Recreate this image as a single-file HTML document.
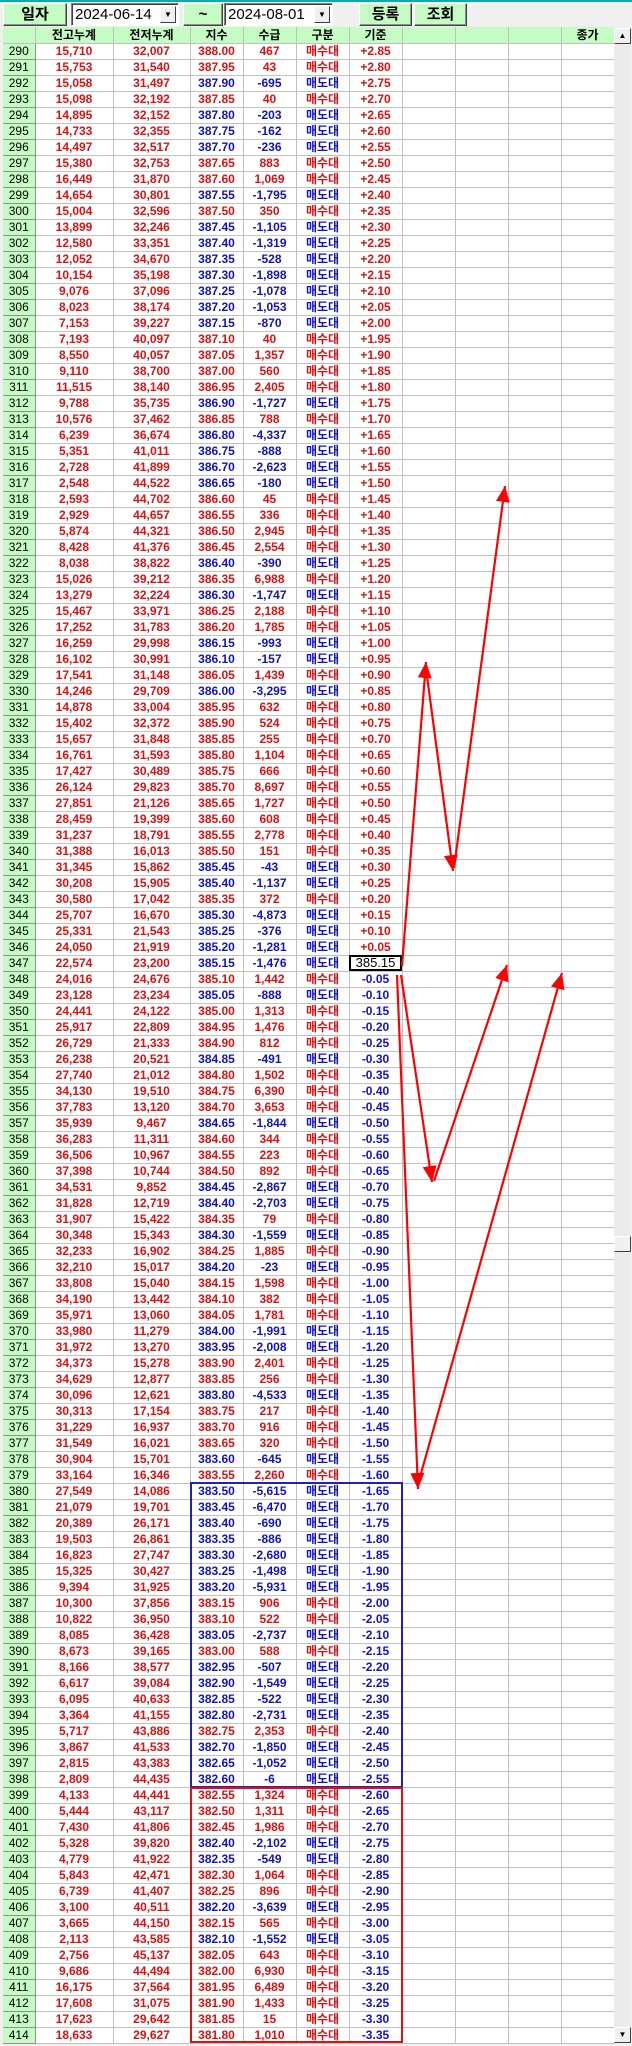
<!DOCTYPE html>
<html><head><meta charset="utf-8">
<style>
*{margin:0;padding:0;box-sizing:border-box}
body{width:632px;height:2046px;background:#f0f0f0;position:relative;overflow:hidden;font-family:"Liberation Sans","Noto Sans CJK KR",sans-serif}
.teal{position:absolute;left:0;top:0;width:632px;height:2px;background:#10a8a8}
.btn{position:absolute;top:3px;height:23px;background:#c4fcc4;border:1px solid;border-color:#fff #404040 #404040 #fff;box-shadow:inset -1px -1px 0 #909090;font-size:15px;font-weight:bold;text-align:center;line-height:21px;color:#000}
.date{position:absolute;top:3px;height:23px;background:#fff;border:1px solid;border-color:#808080 #fff #fff #808080;box-shadow:inset 1px 1px 0 #404040;font-size:15px;line-height:21px;padding-left:3px;color:#000}
.dd{position:absolute;right:2px;top:2px;width:16px;height:17px;background:#f0f0f0;border:1px solid;border-color:#fff #404040 #404040 #fff;font-size:8px;line-height:15px;text-align:center}
table{position:absolute;left:3px;top:27px;border-collapse:collapse;table-layout:fixed;width:611px}
td,th{height:16px;border-right:1px solid #c0c0c0;border-bottom:1px solid #c0c0c0;font-size:12px;text-align:center;white-space:nowrap;overflow:hidden;line-height:14px;padding:0}
td{color:#e01010;font-weight:bold;background:#fff}
th{font-weight:normal;background:#c4fcc4;color:#000;border-color:#909090}
thead th{font-weight:bold;background:#c4fcc4;border-color:#c0c0c0}
td.b{color:#1010d0}
td.k{font-family:"Noto Sans CJK KR",sans-serif;font-weight:bold}
.sb{position:absolute;left:614px;top:27px;width:17px;height:2016px;background:#ebebeb}
.ar{position:absolute;left:614px;width:17px;height:16px;background:#f0f0f0;border:1px solid;border-color:#fff #404040 #404040 #fff;font-size:8px;text-align:center;line-height:14px}
</style></head><body>
<div class="teal"></div>
<div class="btn" style="left:3px;width:64px">일자</div>
<div class="date" style="left:71px;width:108px">2024-06-14<div class="dd">▼</div></div>
<div class="btn" style="left:183px;width:40px">~</div>
<div class="date" style="left:224px;width:109px">2024-08-01<div class="dd">▼</div></div>
<div class="btn" style="left:359px;width:53px">등록</div>
<div class="btn" style="left:414px;width:53px">조회</div>
<table>
<colgroup><col style="width:32px"><col style="width:78px"><col style="width:77px"><col style="width:53px"><col style="width:53px"><col style="width:53px"><col style="width:53px"><col style="width:53px"><col style="width:53px"><col style="width:53px"><col style="width:53px"></colgroup>
<thead><tr><th></th><th>전고누계</th><th>전저누계</th><th>지수</th><th>수급</th><th>구분</th><th>기준</th><th></th><th></th><th></th><th>종가</th></tr></thead>
<tbody>
<tr><th>290</th><td>15,710</td><td>32,007</td><td>388.00</td><td>467</td><td class=k>매수대</td><td>+2.85</td><td></td><td></td><td></td><td></td></tr>
<tr><th>291</th><td>15,753</td><td>31,540</td><td>387.95</td><td>43</td><td class=k>매수대</td><td>+2.80</td><td></td><td></td><td></td><td></td></tr>
<tr><th>292</th><td>15,058</td><td>31,497</td><td class=b>387.90</td><td class=b>-695</td><td class="k b">매도대</td><td>+2.75</td><td></td><td></td><td></td><td></td></tr>
<tr><th>293</th><td>15,098</td><td>32,192</td><td>387.85</td><td>40</td><td class=k>매수대</td><td>+2.70</td><td></td><td></td><td></td><td></td></tr>
<tr><th>294</th><td>14,895</td><td>32,152</td><td class=b>387.80</td><td class=b>-203</td><td class="k b">매도대</td><td>+2.65</td><td></td><td></td><td></td><td></td></tr>
<tr><th>295</th><td>14,733</td><td>32,355</td><td class=b>387.75</td><td class=b>-162</td><td class="k b">매도대</td><td>+2.60</td><td></td><td></td><td></td><td></td></tr>
<tr><th>296</th><td>14,497</td><td>32,517</td><td class=b>387.70</td><td class=b>-236</td><td class="k b">매도대</td><td>+2.55</td><td></td><td></td><td></td><td></td></tr>
<tr><th>297</th><td>15,380</td><td>32,753</td><td>387.65</td><td>883</td><td class=k>매수대</td><td>+2.50</td><td></td><td></td><td></td><td></td></tr>
<tr><th>298</th><td>16,449</td><td>31,870</td><td>387.60</td><td>1,069</td><td class=k>매수대</td><td>+2.45</td><td></td><td></td><td></td><td></td></tr>
<tr><th>299</th><td>14,654</td><td>30,801</td><td class=b>387.55</td><td class=b>-1,795</td><td class="k b">매도대</td><td>+2.40</td><td></td><td></td><td></td><td></td></tr>
<tr><th>300</th><td>15,004</td><td>32,596</td><td>387.50</td><td>350</td><td class=k>매수대</td><td>+2.35</td><td></td><td></td><td></td><td></td></tr>
<tr><th>301</th><td>13,899</td><td>32,246</td><td class=b>387.45</td><td class=b>-1,105</td><td class="k b">매도대</td><td>+2.30</td><td></td><td></td><td></td><td></td></tr>
<tr><th>302</th><td>12,580</td><td>33,351</td><td class=b>387.40</td><td class=b>-1,319</td><td class="k b">매도대</td><td>+2.25</td><td></td><td></td><td></td><td></td></tr>
<tr><th>303</th><td>12,052</td><td>34,670</td><td class=b>387.35</td><td class=b>-528</td><td class="k b">매도대</td><td>+2.20</td><td></td><td></td><td></td><td></td></tr>
<tr><th>304</th><td>10,154</td><td>35,198</td><td class=b>387.30</td><td class=b>-1,898</td><td class="k b">매도대</td><td>+2.15</td><td></td><td></td><td></td><td></td></tr>
<tr><th>305</th><td>9,076</td><td>37,096</td><td class=b>387.25</td><td class=b>-1,078</td><td class="k b">매도대</td><td>+2.10</td><td></td><td></td><td></td><td></td></tr>
<tr><th>306</th><td>8,023</td><td>38,174</td><td class=b>387.20</td><td class=b>-1,053</td><td class="k b">매도대</td><td>+2.05</td><td></td><td></td><td></td><td></td></tr>
<tr><th>307</th><td>7,153</td><td>39,227</td><td class=b>387.15</td><td class=b>-870</td><td class="k b">매도대</td><td>+2.00</td><td></td><td></td><td></td><td></td></tr>
<tr><th>308</th><td>7,193</td><td>40,097</td><td>387.10</td><td>40</td><td class=k>매수대</td><td>+1.95</td><td></td><td></td><td></td><td></td></tr>
<tr><th>309</th><td>8,550</td><td>40,057</td><td>387.05</td><td>1,357</td><td class=k>매수대</td><td>+1.90</td><td></td><td></td><td></td><td></td></tr>
<tr><th>310</th><td>9,110</td><td>38,700</td><td>387.00</td><td>560</td><td class=k>매수대</td><td>+1.85</td><td></td><td></td><td></td><td></td></tr>
<tr><th>311</th><td>11,515</td><td>38,140</td><td>386.95</td><td>2,405</td><td class=k>매수대</td><td>+1.80</td><td></td><td></td><td></td><td></td></tr>
<tr><th>312</th><td>9,788</td><td>35,735</td><td class=b>386.90</td><td class=b>-1,727</td><td class="k b">매도대</td><td>+1.75</td><td></td><td></td><td></td><td></td></tr>
<tr><th>313</th><td>10,576</td><td>37,462</td><td>386.85</td><td>788</td><td class=k>매수대</td><td>+1.70</td><td></td><td></td><td></td><td></td></tr>
<tr><th>314</th><td>6,239</td><td>36,674</td><td class=b>386.80</td><td class=b>-4,337</td><td class="k b">매도대</td><td>+1.65</td><td></td><td></td><td></td><td></td></tr>
<tr><th>315</th><td>5,351</td><td>41,011</td><td class=b>386.75</td><td class=b>-888</td><td class="k b">매도대</td><td>+1.60</td><td></td><td></td><td></td><td></td></tr>
<tr><th>316</th><td>2,728</td><td>41,899</td><td class=b>386.70</td><td class=b>-2,623</td><td class="k b">매도대</td><td>+1.55</td><td></td><td></td><td></td><td></td></tr>
<tr><th>317</th><td>2,548</td><td>44,522</td><td class=b>386.65</td><td class=b>-180</td><td class="k b">매도대</td><td>+1.50</td><td></td><td></td><td></td><td></td></tr>
<tr><th>318</th><td>2,593</td><td>44,702</td><td>386.60</td><td>45</td><td class=k>매수대</td><td>+1.45</td><td></td><td></td><td></td><td></td></tr>
<tr><th>319</th><td>2,929</td><td>44,657</td><td>386.55</td><td>336</td><td class=k>매수대</td><td>+1.40</td><td></td><td></td><td></td><td></td></tr>
<tr><th>320</th><td>5,874</td><td>44,321</td><td>386.50</td><td>2,945</td><td class=k>매수대</td><td>+1.35</td><td></td><td></td><td></td><td></td></tr>
<tr><th>321</th><td>8,428</td><td>41,376</td><td>386.45</td><td>2,554</td><td class=k>매수대</td><td>+1.30</td><td></td><td></td><td></td><td></td></tr>
<tr><th>322</th><td>8,038</td><td>38,822</td><td class=b>386.40</td><td class=b>-390</td><td class="k b">매도대</td><td>+1.25</td><td></td><td></td><td></td><td></td></tr>
<tr><th>323</th><td>15,026</td><td>39,212</td><td>386.35</td><td>6,988</td><td class=k>매수대</td><td>+1.20</td><td></td><td></td><td></td><td></td></tr>
<tr><th>324</th><td>13,279</td><td>32,224</td><td class=b>386.30</td><td class=b>-1,747</td><td class="k b">매도대</td><td>+1.15</td><td></td><td></td><td></td><td></td></tr>
<tr><th>325</th><td>15,467</td><td>33,971</td><td>386.25</td><td>2,188</td><td class=k>매수대</td><td>+1.10</td><td></td><td></td><td></td><td></td></tr>
<tr><th>326</th><td>17,252</td><td>31,783</td><td>386.20</td><td>1,785</td><td class=k>매수대</td><td>+1.05</td><td></td><td></td><td></td><td></td></tr>
<tr><th>327</th><td>16,259</td><td>29,998</td><td class=b>386.15</td><td class=b>-993</td><td class="k b">매도대</td><td>+1.00</td><td></td><td></td><td></td><td></td></tr>
<tr><th>328</th><td>16,102</td><td>30,991</td><td class=b>386.10</td><td class=b>-157</td><td class="k b">매도대</td><td>+0.95</td><td></td><td></td><td></td><td></td></tr>
<tr><th>329</th><td>17,541</td><td>31,148</td><td>386.05</td><td>1,439</td><td class=k>매수대</td><td>+0.90</td><td></td><td></td><td></td><td></td></tr>
<tr><th>330</th><td>14,246</td><td>29,709</td><td class=b>386.00</td><td class=b>-3,295</td><td class="k b">매도대</td><td>+0.85</td><td></td><td></td><td></td><td></td></tr>
<tr><th>331</th><td>14,878</td><td>33,004</td><td>385.95</td><td>632</td><td class=k>매수대</td><td>+0.80</td><td></td><td></td><td></td><td></td></tr>
<tr><th>332</th><td>15,402</td><td>32,372</td><td>385.90</td><td>524</td><td class=k>매수대</td><td>+0.75</td><td></td><td></td><td></td><td></td></tr>
<tr><th>333</th><td>15,657</td><td>31,848</td><td>385.85</td><td>255</td><td class=k>매수대</td><td>+0.70</td><td></td><td></td><td></td><td></td></tr>
<tr><th>334</th><td>16,761</td><td>31,593</td><td>385.80</td><td>1,104</td><td class=k>매수대</td><td>+0.65</td><td></td><td></td><td></td><td></td></tr>
<tr><th>335</th><td>17,427</td><td>30,489</td><td>385.75</td><td>666</td><td class=k>매수대</td><td>+0.60</td><td></td><td></td><td></td><td></td></tr>
<tr><th>336</th><td>26,124</td><td>29,823</td><td>385.70</td><td>8,697</td><td class=k>매수대</td><td>+0.55</td><td></td><td></td><td></td><td></td></tr>
<tr><th>337</th><td>27,851</td><td>21,126</td><td>385.65</td><td>1,727</td><td class=k>매수대</td><td>+0.50</td><td></td><td></td><td></td><td></td></tr>
<tr><th>338</th><td>28,459</td><td>19,399</td><td>385.60</td><td>608</td><td class=k>매수대</td><td>+0.45</td><td></td><td></td><td></td><td></td></tr>
<tr><th>339</th><td>31,237</td><td>18,791</td><td>385.55</td><td>2,778</td><td class=k>매수대</td><td>+0.40</td><td></td><td></td><td></td><td></td></tr>
<tr><th>340</th><td>31,388</td><td>16,013</td><td>385.50</td><td>151</td><td class=k>매수대</td><td>+0.35</td><td></td><td></td><td></td><td></td></tr>
<tr><th>341</th><td>31,345</td><td>15,862</td><td class=b>385.45</td><td class=b>-43</td><td class="k b">매도대</td><td>+0.30</td><td></td><td></td><td></td><td></td></tr>
<tr><th>342</th><td>30,208</td><td>15,905</td><td class=b>385.40</td><td class=b>-1,137</td><td class="k b">매도대</td><td>+0.25</td><td></td><td></td><td></td><td></td></tr>
<tr><th>343</th><td>30,580</td><td>17,042</td><td>385.35</td><td>372</td><td class=k>매수대</td><td>+0.20</td><td></td><td></td><td></td><td></td></tr>
<tr><th>344</th><td>25,707</td><td>16,670</td><td class=b>385.30</td><td class=b>-4,873</td><td class="k b">매도대</td><td>+0.15</td><td></td><td></td><td></td><td></td></tr>
<tr><th>345</th><td>25,331</td><td>21,543</td><td class=b>385.25</td><td class=b>-376</td><td class="k b">매도대</td><td>+0.10</td><td></td><td></td><td></td><td></td></tr>
<tr><th>346</th><td>24,050</td><td>21,919</td><td class=b>385.20</td><td class=b>-1,281</td><td class="k b">매도대</td><td>+0.05</td><td></td><td></td><td></td><td></td></tr>
<tr><th>347</th><td>22,574</td><td>23,200</td><td class=b>385.15</td><td class=b>-1,476</td><td class="k b">매도대</td><td style="color:#000;font-weight:normal;font-size:13px;outline:2px solid #000;outline-offset:-2px">385.15</td><td></td><td></td><td></td><td></td></tr>
<tr><th>348</th><td>24,016</td><td>24,676</td><td>385.10</td><td>1,442</td><td class=k>매수대</td><td class=b>-0.05</td><td></td><td></td><td></td><td></td></tr>
<tr><th>349</th><td>23,128</td><td>23,234</td><td class=b>385.05</td><td class=b>-888</td><td class="k b">매도대</td><td class=b>-0.10</td><td></td><td></td><td></td><td></td></tr>
<tr><th>350</th><td>24,441</td><td>24,122</td><td>385.00</td><td>1,313</td><td class=k>매수대</td><td class=b>-0.15</td><td></td><td></td><td></td><td></td></tr>
<tr><th>351</th><td>25,917</td><td>22,809</td><td>384.95</td><td>1,476</td><td class=k>매수대</td><td class=b>-0.20</td><td></td><td></td><td></td><td></td></tr>
<tr><th>352</th><td>26,729</td><td>21,333</td><td>384.90</td><td>812</td><td class=k>매수대</td><td class=b>-0.25</td><td></td><td></td><td></td><td></td></tr>
<tr><th>353</th><td>26,238</td><td>20,521</td><td class=b>384.85</td><td class=b>-491</td><td class="k b">매도대</td><td class=b>-0.30</td><td></td><td></td><td></td><td></td></tr>
<tr><th>354</th><td>27,740</td><td>21,012</td><td>384.80</td><td>1,502</td><td class=k>매수대</td><td class=b>-0.35</td><td></td><td></td><td></td><td></td></tr>
<tr><th>355</th><td>34,130</td><td>19,510</td><td>384.75</td><td>6,390</td><td class=k>매수대</td><td class=b>-0.40</td><td></td><td></td><td></td><td></td></tr>
<tr><th>356</th><td>37,783</td><td>13,120</td><td>384.70</td><td>3,653</td><td class=k>매수대</td><td class=b>-0.45</td><td></td><td></td><td></td><td></td></tr>
<tr><th>357</th><td>35,939</td><td>9,467</td><td class=b>384.65</td><td class=b>-1,844</td><td class="k b">매도대</td><td class=b>-0.50</td><td></td><td></td><td></td><td></td></tr>
<tr><th>358</th><td>36,283</td><td>11,311</td><td>384.60</td><td>344</td><td class=k>매수대</td><td class=b>-0.55</td><td></td><td></td><td></td><td></td></tr>
<tr><th>359</th><td>36,506</td><td>10,967</td><td>384.55</td><td>223</td><td class=k>매수대</td><td class=b>-0.60</td><td></td><td></td><td></td><td></td></tr>
<tr><th>360</th><td>37,398</td><td>10,744</td><td>384.50</td><td>892</td><td class=k>매수대</td><td class=b>-0.65</td><td></td><td></td><td></td><td></td></tr>
<tr><th>361</th><td>34,531</td><td>9,852</td><td class=b>384.45</td><td class=b>-2,867</td><td class="k b">매도대</td><td class=b>-0.70</td><td></td><td></td><td></td><td></td></tr>
<tr><th>362</th><td>31,828</td><td>12,719</td><td class=b>384.40</td><td class=b>-2,703</td><td class="k b">매도대</td><td class=b>-0.75</td><td></td><td></td><td></td><td></td></tr>
<tr><th>363</th><td>31,907</td><td>15,422</td><td>384.35</td><td>79</td><td class=k>매수대</td><td class=b>-0.80</td><td></td><td></td><td></td><td></td></tr>
<tr><th>364</th><td>30,348</td><td>15,343</td><td class=b>384.30</td><td class=b>-1,559</td><td class="k b">매도대</td><td class=b>-0.85</td><td></td><td></td><td></td><td></td></tr>
<tr><th>365</th><td>32,233</td><td>16,902</td><td>384.25</td><td>1,885</td><td class=k>매수대</td><td class=b>-0.90</td><td></td><td></td><td></td><td></td></tr>
<tr><th>366</th><td>32,210</td><td>15,017</td><td class=b>384.20</td><td class=b>-23</td><td class="k b">매도대</td><td class=b>-0.95</td><td></td><td></td><td></td><td></td></tr>
<tr><th>367</th><td>33,808</td><td>15,040</td><td>384.15</td><td>1,598</td><td class=k>매수대</td><td class=b>-1.00</td><td></td><td></td><td></td><td></td></tr>
<tr><th>368</th><td>34,190</td><td>13,442</td><td>384.10</td><td>382</td><td class=k>매수대</td><td class=b>-1.05</td><td></td><td></td><td></td><td></td></tr>
<tr><th>369</th><td>35,971</td><td>13,060</td><td>384.05</td><td>1,781</td><td class=k>매수대</td><td class=b>-1.10</td><td></td><td></td><td></td><td></td></tr>
<tr><th>370</th><td>33,980</td><td>11,279</td><td class=b>384.00</td><td class=b>-1,991</td><td class="k b">매도대</td><td class=b>-1.15</td><td></td><td></td><td></td><td></td></tr>
<tr><th>371</th><td>31,972</td><td>13,270</td><td class=b>383.95</td><td class=b>-2,008</td><td class="k b">매도대</td><td class=b>-1.20</td><td></td><td></td><td></td><td></td></tr>
<tr><th>372</th><td>34,373</td><td>15,278</td><td>383.90</td><td>2,401</td><td class=k>매수대</td><td class=b>-1.25</td><td></td><td></td><td></td><td></td></tr>
<tr><th>373</th><td>34,629</td><td>12,877</td><td>383.85</td><td>256</td><td class=k>매수대</td><td class=b>-1.30</td><td></td><td></td><td></td><td></td></tr>
<tr><th>374</th><td>30,096</td><td>12,621</td><td class=b>383.80</td><td class=b>-4,533</td><td class="k b">매도대</td><td class=b>-1.35</td><td></td><td></td><td></td><td></td></tr>
<tr><th>375</th><td>30,313</td><td>17,154</td><td>383.75</td><td>217</td><td class=k>매수대</td><td class=b>-1.40</td><td></td><td></td><td></td><td></td></tr>
<tr><th>376</th><td>31,229</td><td>16,937</td><td>383.70</td><td>916</td><td class=k>매수대</td><td class=b>-1.45</td><td></td><td></td><td></td><td></td></tr>
<tr><th>377</th><td>31,549</td><td>16,021</td><td>383.65</td><td>320</td><td class=k>매수대</td><td class=b>-1.50</td><td></td><td></td><td></td><td></td></tr>
<tr><th>378</th><td>30,904</td><td>15,701</td><td class=b>383.60</td><td class=b>-645</td><td class="k b">매도대</td><td class=b>-1.55</td><td></td><td></td><td></td><td></td></tr>
<tr><th>379</th><td>33,164</td><td>16,346</td><td>383.55</td><td>2,260</td><td class=k>매수대</td><td class=b>-1.60</td><td></td><td></td><td></td><td></td></tr>
<tr><th>380</th><td>27,549</td><td>14,086</td><td class=b>383.50</td><td class=b>-5,615</td><td class="k b">매도대</td><td class=b>-1.65</td><td></td><td></td><td></td><td></td></tr>
<tr><th>381</th><td>21,079</td><td>19,701</td><td class=b>383.45</td><td class=b>-6,470</td><td class="k b">매도대</td><td class=b>-1.70</td><td></td><td></td><td></td><td></td></tr>
<tr><th>382</th><td>20,389</td><td>26,171</td><td class=b>383.40</td><td class=b>-690</td><td class="k b">매도대</td><td class=b>-1.75</td><td></td><td></td><td></td><td></td></tr>
<tr><th>383</th><td>19,503</td><td>26,861</td><td class=b>383.35</td><td class=b>-886</td><td class="k b">매도대</td><td class=b>-1.80</td><td></td><td></td><td></td><td></td></tr>
<tr><th>384</th><td>16,823</td><td>27,747</td><td class=b>383.30</td><td class=b>-2,680</td><td class="k b">매도대</td><td class=b>-1.85</td><td></td><td></td><td></td><td></td></tr>
<tr><th>385</th><td>15,325</td><td>30,427</td><td class=b>383.25</td><td class=b>-1,498</td><td class="k b">매도대</td><td class=b>-1.90</td><td></td><td></td><td></td><td></td></tr>
<tr><th>386</th><td>9,394</td><td>31,925</td><td class=b>383.20</td><td class=b>-5,931</td><td class="k b">매도대</td><td class=b>-1.95</td><td></td><td></td><td></td><td></td></tr>
<tr><th>387</th><td>10,300</td><td>37,856</td><td>383.15</td><td>906</td><td class=k>매수대</td><td class=b>-2.00</td><td></td><td></td><td></td><td></td></tr>
<tr><th>388</th><td>10,822</td><td>36,950</td><td>383.10</td><td>522</td><td class=k>매수대</td><td class=b>-2.05</td><td></td><td></td><td></td><td></td></tr>
<tr><th>389</th><td>8,085</td><td>36,428</td><td class=b>383.05</td><td class=b>-2,737</td><td class="k b">매도대</td><td class=b>-2.10</td><td></td><td></td><td></td><td></td></tr>
<tr><th>390</th><td>8,673</td><td>39,165</td><td>383.00</td><td>588</td><td class=k>매수대</td><td class=b>-2.15</td><td></td><td></td><td></td><td></td></tr>
<tr><th>391</th><td>8,166</td><td>38,577</td><td class=b>382.95</td><td class=b>-507</td><td class="k b">매도대</td><td class=b>-2.20</td><td></td><td></td><td></td><td></td></tr>
<tr><th>392</th><td>6,617</td><td>39,084</td><td class=b>382.90</td><td class=b>-1,549</td><td class="k b">매도대</td><td class=b>-2.25</td><td></td><td></td><td></td><td></td></tr>
<tr><th>393</th><td>6,095</td><td>40,633</td><td class=b>382.85</td><td class=b>-522</td><td class="k b">매도대</td><td class=b>-2.30</td><td></td><td></td><td></td><td></td></tr>
<tr><th>394</th><td>3,364</td><td>41,155</td><td class=b>382.80</td><td class=b>-2,731</td><td class="k b">매도대</td><td class=b>-2.35</td><td></td><td></td><td></td><td></td></tr>
<tr><th>395</th><td>5,717</td><td>43,886</td><td>382.75</td><td>2,353</td><td class=k>매수대</td><td class=b>-2.40</td><td></td><td></td><td></td><td></td></tr>
<tr><th>396</th><td>3,867</td><td>41,533</td><td class=b>382.70</td><td class=b>-1,850</td><td class="k b">매도대</td><td class=b>-2.45</td><td></td><td></td><td></td><td></td></tr>
<tr><th>397</th><td>2,815</td><td>43,383</td><td class=b>382.65</td><td class=b>-1,052</td><td class="k b">매도대</td><td class=b>-2.50</td><td></td><td></td><td></td><td></td></tr>
<tr><th>398</th><td>2,809</td><td>44,435</td><td class=b>382.60</td><td class=b>-6</td><td class="k b">매도대</td><td class=b>-2.55</td><td></td><td></td><td></td><td></td></tr>
<tr><th>399</th><td>4,133</td><td>44,441</td><td>382.55</td><td>1,324</td><td class=k>매수대</td><td class=b>-2.60</td><td></td><td></td><td></td><td></td></tr>
<tr><th>400</th><td>5,444</td><td>43,117</td><td>382.50</td><td>1,311</td><td class=k>매수대</td><td class=b>-2.65</td><td></td><td></td><td></td><td></td></tr>
<tr><th>401</th><td>7,430</td><td>41,806</td><td>382.45</td><td>1,986</td><td class=k>매수대</td><td class=b>-2.70</td><td></td><td></td><td></td><td></td></tr>
<tr><th>402</th><td>5,328</td><td>39,820</td><td class=b>382.40</td><td class=b>-2,102</td><td class="k b">매도대</td><td class=b>-2.75</td><td></td><td></td><td></td><td></td></tr>
<tr><th>403</th><td>4,779</td><td>41,922</td><td class=b>382.35</td><td class=b>-549</td><td class="k b">매도대</td><td class=b>-2.80</td><td></td><td></td><td></td><td></td></tr>
<tr><th>404</th><td>5,843</td><td>42,471</td><td>382.30</td><td>1,064</td><td class=k>매수대</td><td class=b>-2.85</td><td></td><td></td><td></td><td></td></tr>
<tr><th>405</th><td>6,739</td><td>41,407</td><td>382.25</td><td>896</td><td class=k>매수대</td><td class=b>-2.90</td><td></td><td></td><td></td><td></td></tr>
<tr><th>406</th><td>3,100</td><td>40,511</td><td class=b>382.20</td><td class=b>-3,639</td><td class="k b">매도대</td><td class=b>-2.95</td><td></td><td></td><td></td><td></td></tr>
<tr><th>407</th><td>3,665</td><td>44,150</td><td>382.15</td><td>565</td><td class=k>매수대</td><td class=b>-3.00</td><td></td><td></td><td></td><td></td></tr>
<tr><th>408</th><td>2,113</td><td>43,585</td><td class=b>382.10</td><td class=b>-1,552</td><td class="k b">매도대</td><td class=b>-3.05</td><td></td><td></td><td></td><td></td></tr>
<tr><th>409</th><td>2,756</td><td>45,137</td><td>382.05</td><td>643</td><td class=k>매수대</td><td class=b>-3.10</td><td></td><td></td><td></td><td></td></tr>
<tr><th>410</th><td>9,686</td><td>44,494</td><td>382.00</td><td>6,930</td><td class=k>매수대</td><td class=b>-3.15</td><td></td><td></td><td></td><td></td></tr>
<tr><th>411</th><td>16,175</td><td>37,564</td><td>381.95</td><td>6,489</td><td class=k>매수대</td><td class=b>-3.20</td><td></td><td></td><td></td><td></td></tr>
<tr><th>412</th><td>17,608</td><td>31,075</td><td>381.90</td><td>1,433</td><td class=k>매수대</td><td class=b>-3.25</td><td></td><td></td><td></td><td></td></tr>
<tr><th>413</th><td>17,623</td><td>29,642</td><td>381.85</td><td>15</td><td class=k>매수대</td><td class=b>-3.30</td><td></td><td></td><td></td><td></td></tr>
<tr><th>414</th><td>18,633</td><td>29,627</td><td>381.80</td><td>1,010</td><td class=k>매수대</td><td class=b>-3.35</td><td></td><td></td><td></td><td></td></tr>
</tbody></table>
<div class="sb"></div>
<div class="ar" style="top:28px">▲</div>
<div class="ar" style="top:1236px"></div>
<div class="ar" style="top:2027px">▼</div>
<svg style="position:absolute;left:0;top:0" width="632" height="2046">
<defs><marker id="h" markerUnits="userSpaceOnUse" markerWidth="18" markerHeight="14" refX="16" refY="7" orient="auto"><path d="M0,0 L16,7 L0,14 Z" fill="#f00"/></marker></defs>
<g stroke="#f00" stroke-width="2.2" fill="none" marker-end="url(#h)">
<line x1="402" y1="966" x2="426" y2="662"/>
<line x1="427" y1="676" x2="453" y2="871"/>
<line x1="454" y1="868" x2="505" y2="486"/>
<line x1="401" y1="975" x2="432" y2="1182"/>
<line x1="434" y1="1181" x2="507" y2="965"/>
<line x1="397" y1="975" x2="418" y2="1489"/>
<line x1="420" y1="1477" x2="562" y2="973"/>
</g>
<rect x="191" y="1483" width="211" height="304" fill="none" stroke="#2020c0" stroke-width="2"/>
<rect x="191" y="1788" width="211" height="254" fill="none" stroke="#e01010" stroke-width="2"/>
</svg>
</body></html>
